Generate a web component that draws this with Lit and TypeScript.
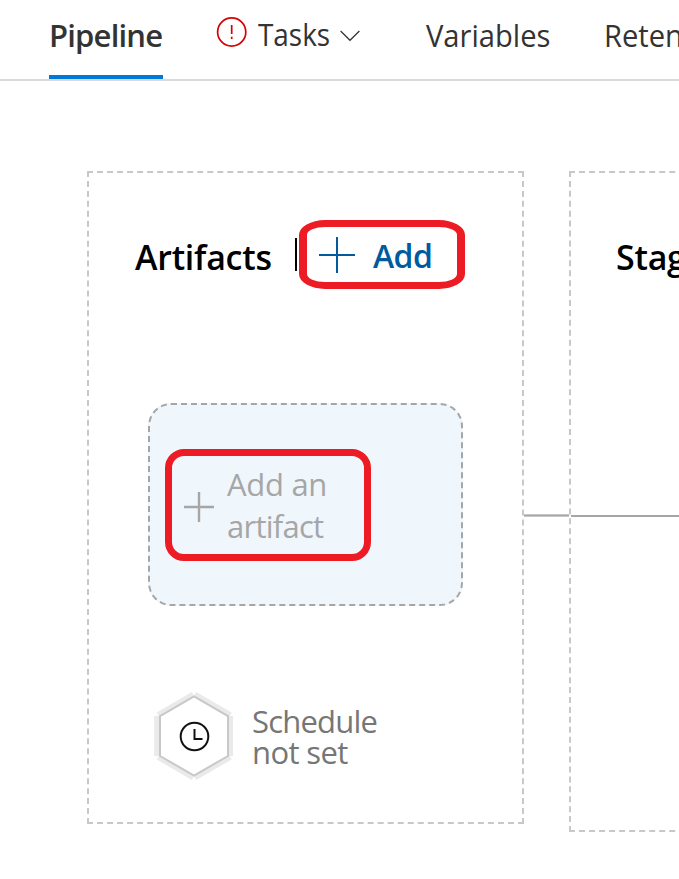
import { LitElement, html, css } from "lit";
import { customElement } from "lit/decorators.js";

@customElement("nav-tabs")
class NavTabs extends LitElement {
  static styles = css`
    :host { display: block; }
    .bar {
      display: flex;
      box-sizing: border-box;
      height: 81px;
      padding-left: 49px;
      border-bottom: 2px solid #d9d9d9;
      font-size: 31px;
      color: #333;
      white-space: nowrap;
    }
    .tab { box-sizing: border-box; flex: none; height: 79px; line-height: 70px; }
    .pipeline { width: 114px; border-bottom: 4px solid #0078d7; font-weight: 600; letter-spacing: -0.8px; }
    .tasks { display: flex; width: 144px; margin-left: 53px; line-height: 69px; }
    .tasks .name { width: 83px; margin-left: 10px; transform: scaleX(0.9); transform-origin: 0 0; }
    .alert { flex: none; margin-top: 16px; }
    .chevron { flex: none; margin-top: 29px; }
    .variables { width: 124px; margin-left: 66px; transform: scaleX(0.94); transform-origin: 0 0; }
    .retention { margin-left: 54px; transform: scaleX(0.94); transform-origin: 0 0; }
  `;
  render() {
    return html`<nav class="bar">
      <div class="tab pipeline">Pipeline</div>
      <div class="tab tasks">
        <svg class="alert" width="32" height="32" viewBox="0 0 32 32" fill="none" stroke="#d80000">
          <circle cx="15.7" cy="16" r="14.1" stroke-width="1.7" />
          <path d="M15.7 9v9M15.7 20.8v2.2" stroke-width="1.7" />
        </svg>
        <span class="name">Tasks</span>
        <svg class="chevron" width="20" height="14" viewBox="0 0 20 14" fill="none" stroke="#333" stroke-width="1.2">
          <path d="M.6 2 10 11.3 19.4 2" />
        </svg>
      </div>
      <div class="tab variables">Variables</div>
      <div class="tab retention">Retention</div>
    </nav>`;
  }
}

@customElement("schedule-trigger")
class ScheduleTrigger extends LitElement {
  static styles = css`
    :host { display: flex; }
    .hex { flex: none; }
    .label { margin: 16px 0 0 14px; font-size: 31px; line-height: 31px; color: #767676; white-space: nowrap; }
    .first { letter-spacing: -0.8px; }
    .second { letter-spacing: -0.6px; }
  `;
  render() {
    return html`
      <svg class="hex" width="88" height="90" viewBox="0 0 88 90" fill="none">
        <path stroke="#eaeaea" stroke-width="5" d="M6.7 26v40M80.5 26v40M8 24.7 43 4.2M45 4.2 80.5 24.7M8 67.3 43 87.8M45 87.8 80.5 67.3" />
        <path stroke="#c8c8c8" stroke-width="2" d="M10 26.2 44 6.5 78 26.2V66L44 85.5 10 66z" />
        <circle cx="44.5" cy="46.5" r="13.8" stroke="#111" stroke-width="2" />
        <path stroke="#111" stroke-width="2" d="M44.5 39v10h8" />
      </svg>
      <div class="label"><div class="first">Schedule</div><div class="second">not set</div></div>
    `;
  }
}

@customElement("app-root")
class AppRoot extends LitElement {
  static styles = css`
    :host {
      display: block;
      width: 679px;
      height: 879px;
      overflow: hidden;
      background: #fff;
      font-family: "Open Sans", "Noto Sans", sans-serif;
    }
    .canvas { display: flex; align-items: flex-start; padding: 90px 0 0 87px; }
    .panel { box-sizing: border-box; flex: none; border: 2px dashed #c8c8c8; }
    .artifacts { width: 437px; height: 653px; }
    .stages { width: 437px; height: 661px; }
    .head { display: flex; height: 69px; margin: 47px 0 0 46px; white-space: nowrap; }
    .title { font-size: 34px; line-height: 74px; font-weight: 600; color: #000; letter-spacing: -0.25px; }
    .artifacts .title { width: 160px; }
    .divider { width: 2px; height: 33px; margin-top: 18px; background: #000; }
    .add {
      display: flex;
      box-sizing: border-box;
      width: 166px;
      height: 69px;
      margin-left: 2px;
      padding-left: 12px;
      border: solid #ed1c24;
      border-width: 7px 8px;
      border-radius: 26px / 15px;
      color: #005a9e;
      font-size: 32px;
      line-height: 57px;
      font-weight: 600;
      letter-spacing: -0.6px;
    }
    .add svg { flex: none; margin: 9px 18px 0 0; }
    .card {
      box-sizing: border-box;
      width: 315px;
      height: 203px;
      margin: 114px 0 0 59px;
      padding: 44px 0 0 15px;
      border: 2px dashed #a6a6a6;
      border-radius: 23px;
      background: #eff6fc;
    }
    .empty {
      display: flex;
      box-sizing: border-box;
      width: 206px;
      height: 112px;
      padding: 7px 0 0 12px;
      border: 7px solid #ed1c24;
      border-radius: 19px;
      color: #a6a6a6;
      font-size: 31px;
      line-height: 42px;
      white-space: nowrap;
      letter-spacing: -0.3px;
    }
    .empty .file { letter-spacing: -0.75px; }
    .empty svg { flex: none; margin: 29px 13px 0 0; }
    schedule-trigger { margin: 84px 0 0 61px; }
    .link { flex: none; width: 45px; height: 1px; margin-top: 343px; border: solid #c8c8c8; border-width: 1px 0; background: #a6a6a6; }
    .stages .head { margin-left: 45px; }
    .wire { height: 2px; margin-top: 226px; background: #a6a6a6; }
  `;
  render() {
    return html`
      <nav-tabs></nav-tabs>
      <main class="canvas">
        <section class="panel artifacts">
          <div class="head">
            <div class="title">Artifacts</div>
            <div class="divider"></div>
            <div class="add">
              <svg width="36" height="38" viewBox="0 0 36 38"><path d="M18 1v36M0 19h36" stroke="#005a9e" stroke-width="2" /></svg>
              <span>Add</span>
            </div>
          </div>
          <div class="card">
            <div class="empty">
              <svg width="30" height="30" viewBox="0 0 30 30"><path d="M15 0v30M0 15h30" stroke="#a6a6a6" stroke-width="2.4" /></svg>
              <div>Add an<br /><span class="file">artifact</span></div>
            </div>
          </div>
          <schedule-trigger></schedule-trigger>
        </section>
        <div class="link"></div>
        <section class="panel stages">
          <div class="head"><div class="title">Stages</div></div>
          <div class="wire"></div>
        </section>
      </main>
    `;
  }
}
